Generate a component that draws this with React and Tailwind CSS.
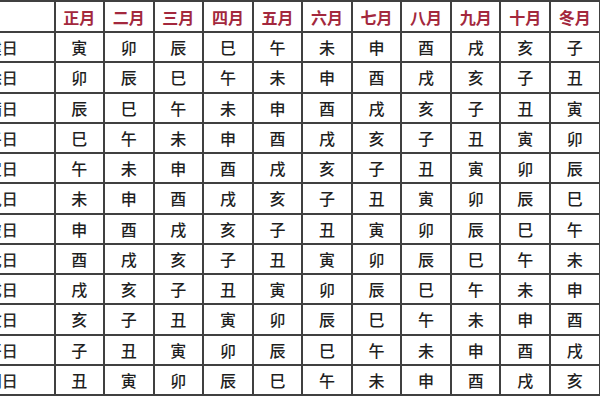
import { Fragment } from "react";

const BRANCHES = ["子", "丑", "寅", "卯", "辰", "巳", "午", "未", "申", "酉", "戌", "亥"];
const MONTHS = ["正月", "二月", "三月", "四月", "五月", "六月", "七月", "八月", "九月", "十月", "冬月"];
const DAYS = ["建日", "除日", "满日", "平日", "定日", "执日", "破日", "危日", "成日", "收日", "开日", "闭日"];

const font = { fontFamily: '"Noto Sans CJK SC", "Noto Sans", sans-serif' };

export default function App() {
  return (
    <div className="w-[600px] h-[400px] bg-white overflow-hidden" style={font}>
      {/* first column runs off the left edge, as in the screenshot */}
      <div className="ml-[-50px] w-[660px] bg-[#404040] pt-[2px] pb-[2px] grid grid-cols-[103.5px_repeat(11,47.55px)] grid-rows-[29px_repeat(12,28.25px)] gap-[2px]">
        <div className="bg-white" />
        {MONTHS.map(m => (
          <div key={m} className="bg-white flex items-center justify-center text-[16px] font-bold text-[#a3283d] leading-none">
            {m}
          </div>
        ))}
        {DAYS.map((d, i) => (
          <Fragment key={d}>
            <div className="bg-white flex items-center justify-center text-[16px] font-medium text-[#2a2a2a] leading-none">
              {d}
            </div>
            {MONTHS.map((m, j) => (
              <div key={m} className="bg-white flex items-center justify-center text-[16px] font-medium text-[#1f1f1f] leading-none">
                {BRANCHES[(2 + i + j) % 12]}
              </div>
            ))}
          </Fragment>
        ))}
      </div>
    </div>
  );
}
